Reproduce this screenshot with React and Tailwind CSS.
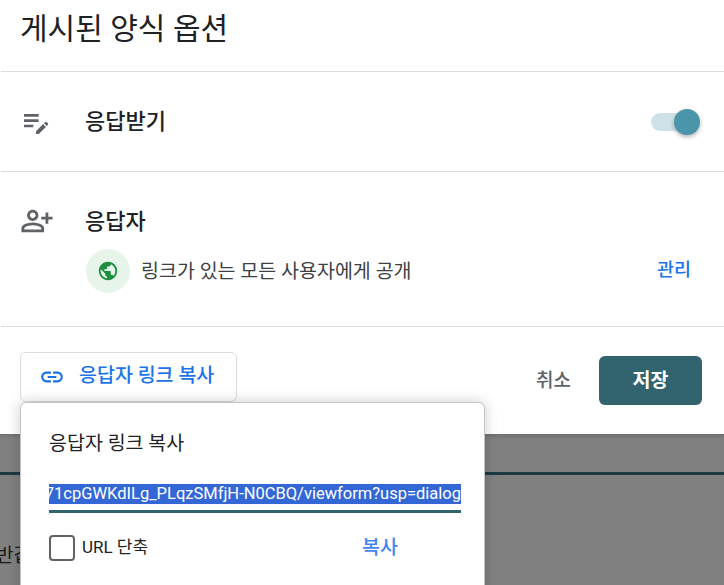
import React from "react";
import { MdEditNote, MdOutlinePersonAddAlt, MdPublic, MdLink } from "react-icons/md";

export default function App() {
  return (
    <div className="relative flex h-[585px] w-[724px] flex-col overflow-hidden bg-white font-['Roboto','Noto_Sans_CJK_KR',sans-serif]">
      <div className="flex h-[434px] flex-col bg-white pl-px">
        <div className="flex h-[72px] items-start border-b border-[#dadce0] pl-[19px] pt-[9px]">
          <h1 className="text-[30px] leading-[40px] font-normal text-[#202124]">게시된 양식 옵션</h1>
        </div>
        <div className="flex h-[100px] items-center border-b border-[#dadce0] pl-[19px] pr-[35px]">
          <MdEditNote className="h-[32px] w-[32px] text-[#5f6368]" />
          <span className="ml-[33px] flex-1 text-[22px] font-medium text-[#202124]">응답받기</span>
          <div className="relative h-[18px] w-[38px] rounded-full bg-[#cfe1e8]">
            <div className="absolute -right-[11px] -top-[4px] h-[26px] w-[26px] rounded-full bg-[#4a95a9] shadow-[0_2px_4px_rgba(0,0,0,0.3)]" />
          </div>
        </div>
        <div className="flex h-[155px] flex-col border-b border-[#dadce0] pl-[19px] pr-[33px] pt-[32px]">
          <div className="flex items-center">
            <MdOutlinePersonAddAlt className="h-[34px] w-[34px] text-[#5f6368]" />
            <span className="ml-[31px] text-[22px] font-medium text-[#202124]">응답자</span>
          </div>
          <div className="mt-[11px] flex items-center pl-[66px]">
            <div className="flex h-[44px] w-[44px] items-center justify-center rounded-full bg-[#e6f4ea]">
              <MdPublic className="h-[22px] w-[22px] text-[#1e8e3e]" />
            </div>
            <span className="ml-[11px] mt-[2px] flex-1 text-[19.5px] text-[#3c4043]">링크가 있는 모든 사용자에게 공개</span>
            <span className="text-[18.5px] font-medium text-[#1a73e8]">관리</span>
          </div>
        </div>
        <div className="flex items-start pl-[19px] pr-[22px] pt-[25px]">
          <button className="flex h-[50px] w-[217px] items-center rounded-[6px] border border-[#dadce0] bg-white pl-[18px]">
            <MdLink className="h-[26px] w-[26px] text-[#1a73e8]" />
            <span className="ml-[14px] -mt-[2px] text-[19.5px] font-medium text-[#1a73e8]">응답자 링크 복사</span>
          </button>
          <div className="flex-1" />
          <span className="mt-[15px] text-[19px] font-medium text-[#5f6368]">취소</span>
          <button className="ml-[28px] mt-[4px] h-[49px] w-[103px] rounded-[6px] bg-[#31646f] text-[19.5px] font-bold text-white">저장</button>
        </div>
      </div>
      <div className="relative flex-1 bg-[#808080] shadow-[inset_0_6px_6px_-6px_rgba(0,0,0,0.25)]">
        <div className="mt-[38px] h-[3px] bg-[#1c3a42]" />
        <div className="absolute -left-[4px] top-[109px] text-[19px] leading-[26px] text-[#1a1a1a]">반갑</div>
      </div>
      <div className="absolute left-[20px] top-[402px] h-[220px] w-[465px] rounded-[6px] border border-[#c4c4c4] bg-white pl-[28px] pr-[23px] pt-[27px] shadow-[0_0_14px_rgba(0,0,0,0.2)]">
        <div className="text-[19.5px] leading-[28px] text-[#202124]">응답자 링크 복사</div>
        <div className="mt-[26px] flex h-[20px] justify-end overflow-hidden whitespace-nowrap text-[16.5px] leading-[20px]">
          <span className="bg-[#3367d6] text-white">1X71cpGWKdILg_PLqzSMfjH-N0CBQ/viewform?usp=dialog</span>
        </div>
        <div className="mt-[6px] h-[3px] bg-[#31646f]" />
        <div className="mt-[20px] flex items-center">
          <div className="h-[26px] w-[26px] rounded-[4px] border-2 border-[#5f6368]" />
          <span className="ml-[7px] text-[17px] text-[#202124]">URL 단축</span>
          <span className="ml-auto mr-[63px] text-[19.5px] font-medium text-[#4285f4]">복사</span>
        </div>
      </div>
    </div>
  );
}
